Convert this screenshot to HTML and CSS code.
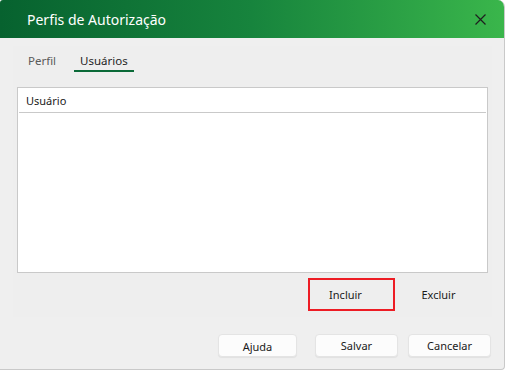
FILE: index.html
```html
<!DOCTYPE html>
<html lang="pt-BR">
<head>
  <meta charset="UTF-8" />
  <title>Perfis de Autorização</title>
  <link rel="stylesheet" href="styles.css">
</head>
<body>
  <div class="dialog">
    <header class="title-bar">
      <span class="title">Perfis de Autorização</span>
      <button class="close-btn" aria-label="Fechar">
        <svg width="11" height="11" viewBox="0 0 11 11">
          <path d="M0.5 0.5 L10.5 10.5 M10.5 0.5 L0.5 10.5" stroke="#1e1e1e" stroke-width="1.2" fill="none" />
        </svg>
      </button>
    </header>
    <section class="panel">
      <nav class="tabs">
        <a class="tab" href="#perfil">Perfil</a>
        <a class="tab active" href="#usuarios">Usuários</a>
      </nav>
      <div class="grid">
        <div class="grid-head">Usuário</div>
        <div class="grid-body"></div>
      </div>
      <div class="grid-actions">
        <button class="link-btn highlighted">Incluir</button>
        <button class="link-btn">Excluir</button>
      </div>
    </section>
    <footer class="footer">
      <button class="btn btn-help">Ajuda</button>
      <button class="btn">Salvar</button>
      <button class="btn">Cancelar</button>
    </footer>
  </div>
</body>
</html>
```

FILE: styles.css
```css
:root {
  --green-dark: #07622f;
  --green-light: #3ab64b;
  --line: #c9c9c9;
  --bg: #efefef;
}
* {
  margin: 0;
  padding: 0;
  box-sizing: border-box;
}
body {
  font-family: "Noto Sans", "Open Sans", sans-serif;
  background: #ffffff;
  color: #1a1a1a;
}
.dialog {
  width: 505px;
  height: 370px;
  background: var(--bg);
  border-right: 1px solid var(--line);
  border-bottom: 1px solid var(--line);
  border-radius: 3px 7px 4px 0;
  overflow: hidden;
}
.title-bar {
  height: 38px;
  display: flex;
  align-items: center;
  justify-content: space-between;
  padding: 0 14px 0 27px;
  background: linear-gradient(to right, var(--green-dark), #17843d 50%, var(--green-light));
}
.title {
  color: #ffffff;
  font-size: 14px;
}
.close-btn {
  background: none;
  border: none;
  width: 20px;
  height: 20px;
  display: flex;
  align-items: center;
  justify-content: center;
  cursor: pointer;
}
.panel {
  margin: 8px 12px 0 13px;
  padding: 6px 4px 6px 4px;
  background: #eeeeee;
}
.tabs {
  display: flex;
  gap: 12px;
  margin-left: 5px;
}
.tab {
  padding: 0 6px;
  line-height: 18px;
  font-size: 11.5px;
  color: #5a5a5a;
  text-decoration: none;
  border-bottom: 2px solid transparent;
}
.tab.active {
  color: #1e1e1e;
  border-bottom-color: #0b6a38;
}
.grid {
  margin-top: 15px;
  height: 186px;
  background: #ffffff;
  border: 1px solid var(--line);
}
.grid-head {
  height: 25px;
  margin: 0 1px;
  padding-left: 7px;
  display: flex;
  align-items: center;
  font-size: 11px;
  border-bottom: 1px solid var(--line);
}
.grid-actions {
  display: flex;
  justify-content: flex-end;
  margin-top: 5px;
  padding-right: 6px;
}
.link-btn {
  width: 87px;
  height: 33px;
  background: none;
  border: 2px solid transparent;
  font-family: inherit;
  font-size: 11px;
  color: #1a1a1a;
  cursor: pointer;
}
.link-btn.highlighted {
  border-color: #ed1c24;
  padding-right: 12px;
}
.footer {
  display: flex;
  justify-content: flex-end;
  gap: 10px;
  padding: 17px 13px 0 0;
}
.btn {
  width: 83px;
  height: 23px;
  background: #fcfcfc;
  border: 1px solid #e4e4e4;
  border-radius: 4px;
  box-shadow: 0 1px 1px rgba(0, 0, 0, 0.06);
  font-family: inherit;
  font-size: 11px;
  color: #1a1a1a;
  cursor: pointer;
}
.btn-help {
  width: 79px;
  margin-right: 8px;
  padding-top: 2px;
}
```
